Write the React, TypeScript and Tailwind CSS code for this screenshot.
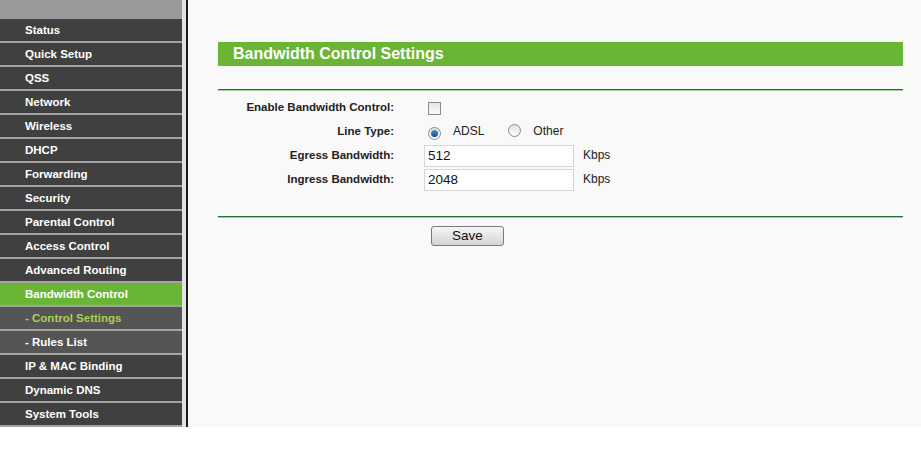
import React from "react";

const menu = [
  { label: "Status" },
  { label: "Quick Setup" },
  { label: "QSS" },
  { label: "Network" },
  { label: "Wireless" },
  { label: "DHCP" },
  { label: "Forwarding" },
  { label: "Security" },
  { label: "Parental Control" },
  { label: "Access Control" },
  { label: "Advanced Routing" },
  { label: "Bandwidth Control", active: true },
  { label: "- Control Settings", sub: true, current: true },
  { label: "- Rules List", sub: true },
  { label: "IP & MAC Binding" },
  { label: "Dynamic DNS" },
  { label: "System Tools" },
];

function Sidebar() {
  return (
    <div className="w-[182px] flex flex-col bg-[#a3a3a3]">
      <div className="h-[19px] bg-[#9a9a9a]" />
      {menu.map((item) => (
        <div
          key={item.label}
          className={
            "h-[22px] mb-[2px] flex items-center pl-[25px] pt-[1px] text-[11.5px] font-bold " +
            (item.active
              ? "bg-[#6ab536] text-white"
              : item.sub
              ? "bg-[#555555] " + (item.current ? "text-[#a9d04e]" : "text-white")
              : "bg-[#404040] text-white")
          }
        >
          {item.label}
        </div>
      ))}
    </div>
  );
}

function Row({ label, children }: { label: string; children: React.ReactNode }) {
  return (
    <div className="flex items-center h-[24px]">
      <div className="w-[176px] text-right font-bold text-[11.5px] text-[#222]">{label}</div>
      <div className="ml-[30px] flex items-center">{children}</div>
    </div>
  );
}

function Radio({ checked }: { checked?: boolean }) {
  return (
    <span className="inline-flex w-[13px] h-[13px] rounded-full border border-[#8a8a8a] bg-gradient-to-b from-[#e0e0e0] to-[#ffffff] items-center justify-center mt-[4px]">
      {checked && <span className="w-[7px] h-[7px] rounded-full bg-gradient-to-b from-[#4a90c8] to-[#0c4f86]" />}
    </span>
  );
}

export default function App() {
  return (
    <div className="w-[921px] h-[460px] bg-white font-['Liberation_Sans',Arial,sans-serif]">
      <div className="flex h-[427px]">
        <Sidebar />
        <div className="w-[4px] bg-[#e2e2e2]" />
        <div className="w-[2px] bg-[#1a1a1a]" />
        <div className="flex-1 bg-[#f9f9f9] pl-[30px] pr-[18px] pt-[42px]">
          <div className="h-[24px] bg-[#6ab536] flex items-center pl-[15px] text-white font-bold text-[16px]">
            Bandwidth Control Settings
          </div>
          <div className="mt-[23px] h-[1px] bg-[#266d3e]" />
          <div className="h-[1px] bg-[#9fd19a]" />
          <div className="pt-[5px]">
            <Row label="Enable Bandwidth Control:">
              <span className="w-[13px] h-[13px] border border-[#8a8a8a] bg-gradient-to-b from-[#e4e4e4] to-[#fafafa] ml-[4px]" />
            </Row>
            <Row label="Line Type:">
              <span className="ml-[4px]"><Radio checked /></span>
              <span className="ml-[12px] text-[12px] text-[#222] -mt-[2px]">ADSL</span>
              <span className="ml-[24px]"><Radio /></span>
              <span className="ml-[12px] text-[12px] text-[#222] -mt-[2px]">Other</span>
            </Row>
            <Row label="Egress Bandwidth:">
              <span className="w-[150px] h-[22px] border border-[#d6d6d6] bg-white flex items-center pl-[3px] text-[13.5px] text-[#111]">512</span>
              <span className="ml-[9px] text-[12px] text-[#222] -mt-[2px]">Kbps</span>
            </Row>
            <Row label="Ingress Bandwidth:">
              <span className="w-[150px] h-[22px] border border-[#d6d6d6] bg-white flex items-center pl-[3px] text-[13.5px] text-[#111]">2048</span>
              <span className="ml-[9px] text-[12px] text-[#222] -mt-[2px]">Kbps</span>
            </Row>
          </div>
          <div className="mt-[24px] h-[1px] bg-[#266d3e]" />
          <div className="h-[1px] bg-[#9fd19a]" />
          <div className="flex pl-[213px] pt-[8px]">
            <button className="w-[73px] h-[20px] border border-[#7a7a7a] rounded-[3px] bg-gradient-to-b from-[#f6f6f6] to-[#d4d4d4] text-[13.5px] text-[#111] leading-none">
              Save
            </button>
          </div>
        </div>
      </div>
    </div>
  );
}
